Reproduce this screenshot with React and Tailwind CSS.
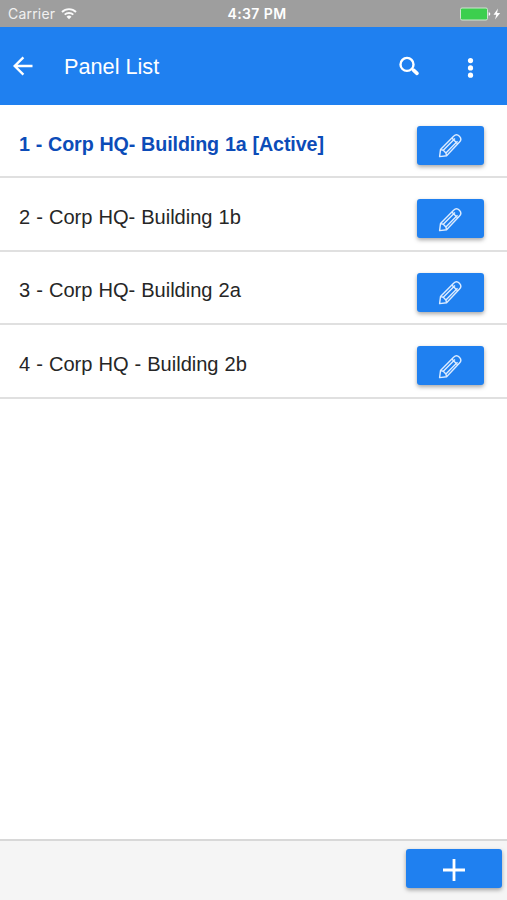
const panels = [
  { label: '1 - Corp HQ- Building 1a [Active]', active: true },
  { label: '2 - Corp HQ- Building 1b' },
  { label: '3 - Corp HQ- Building 2a' },
  { label: '4 - Corp HQ - Building 2b' },
];

function StatusBar() {
  return (
    <div className="grid h-[27px] shrink-0 grid-cols-3 items-center bg-[#9e9e9e] text-white">
      <div className="flex items-center pl-[8px]">
        <span className="w-[48px] font-['Inter','Liberation_Sans',sans-serif] text-[14px] leading-[26px] tracking-[0.2px] whitespace-nowrap text-[#f1f1f1]">
          Carrier
        </span>
        <svg className="ml-[5px] h-[12px] w-[16px]" viewBox="0 0 16 12" fill="none" stroke="#fafafa" strokeWidth="1.9">
          <path d="M1 4a10 10 0 0 1 14 0" />
          <path d="M3.7 6.7a6.1 6.1 0 0 1 8.6 0" />
          <path d="M8 11.3 5.5 8.8a3.5 3.5 0 0 1 5 0z" fill="#fafafa" stroke="none" />
        </svg>
      </div>
      <div className="pt-px pl-[7px] text-center font-['Inter','Liberation_Sans',sans-serif] text-[14px] leading-[26px] font-semibold tracking-[0.4px] whitespace-nowrap">
        4:37 PM
      </div>
      <div className="flex items-center justify-end pr-[5px]">
        <svg className="h-[14px] w-[42px]" viewBox="0 0 42 14">
          <rect x="0.5" y="1" width="27" height="12" rx="1.5" fill="#3ccf4e" stroke="#cfe5d1" />
          <path d="M28.7 5.3q1.6 0 1.6 1.7t-1.6 1.7z" fill="#fff" />
          <path d="m38 1.6-4.5 6.1h2.8L35 12.6l5.2-6.7h-3.1z" fill="#fff" />
        </svg>
      </div>
    </div>
  );
}

function Header() {
  return (
    <header className="flex h-[78px] shrink-0 items-center bg-[#1f80f0] text-white">
      <svg className="ml-[12px] h-[22px] w-[22px]" viewBox="0 0 22 22" fill="none" stroke="#fff" strokeWidth="2.4">
        <path d="M20.5 11H3M11.4 2.3 2.7 11l8.7 8.7" />
      </svg>
      <h1 className="mt-[2px] ml-[30px] flex-1 text-[21.7px] leading-[28px] whitespace-nowrap">Panel List</h1>
      <svg className="mr-[46px] h-[22px] w-[22px]" viewBox="0 0 22 22" fill="none" stroke="#fff">
        <circle cx="9" cy="9.4" r="6.5" strokeWidth="2.4" />
        <path d="m15.5 15.1 3.5 3.2" strokeWidth="3.6" strokeLinecap="round" />
      </svg>
      <svg className="mt-[4px] mr-[32px] h-[22px] w-[9px]" viewBox="0 0 9 22" fill="#fff">
        <circle cx="4.5" cy="3.6" r="2.6" />
        <circle cx="4.5" cy="10.9" r="2.6" />
        <circle cx="4.5" cy="18.2" r="2.6" />
      </svg>
    </header>
  );
}

function PencilIcon() {
  return (
    <svg className="mt-[2px] mr-[1px] h-[24px] w-[24px]" viewBox="0 0 24 24" fill="none" stroke="#dcebff" strokeWidth="1.4" strokeLinejoin="round">
      <path d="M1.6 22.6 2.5 15.6 15.6 2.2c1.9-1.8 4.2-1.5 5.8.1s1.9 3.9.1 5.8L8.6 21.7z" />
      <path d="m2.5 15.6 2.8.7 2.6 2.7.7 2.7M5.3 16.3 17 4.5M7.9 19 19.5 7.2M13.8 4l6 6" />
    </svg>
  );
}

export default function App() {
  return (
    <div className="flex h-[900px] w-[507px] flex-col overflow-hidden bg-white font-['Liberation_Sans',Arial,sans-serif]">
      <StatusBar />
      <Header />
      <ul className="flex-1">
        {panels.map((panel) => (
          <li
            key={panel.label}
            className="flex h-[73.4px] items-center justify-between border-b-2 border-[#e0e0e0] pr-[23px] pl-[19px]"
          >
            <span
              className={
                panel.active
                  ? 'mt-[6px] text-[19.7px] leading-[26px] font-bold tracking-[-0.1px] [word-spacing:0.5px] whitespace-nowrap text-[#0c4cb8]'
                  : 'mt-[6px] text-[20.1px] leading-[26px] tracking-[-0.03px] [word-spacing:0.5px] whitespace-nowrap text-[#262626]'
              }
            >
              {panel.label}
            </span>
            <button
              aria-label="Edit"
              className="mt-[9.4px] flex h-[39px] w-[67px] items-center justify-center rounded-[3px] bg-[#1f80f0] shadow-[0_2px_4px_rgba(0,0,0,0.35)]"
            >
              <PencilIcon />
            </button>
          </li>
        ))}
      </ul>
      <footer className="flex h-[61px] shrink-0 items-start justify-end border-t-2 border-[#d8d8d8] bg-[#f5f5f5] pt-[8px] pr-[5px]">
        <button
          aria-label="Add"
          className="flex h-[39px] w-[96px] items-center justify-center rounded-[3px] bg-[#1f80f0] shadow-[0_2px_4px_rgba(0,0,0,0.35)]"
        >
          <svg className="mt-[2px] h-[24px] w-[24px]" viewBox="0 0 24 24" stroke="#fff" strokeWidth="2.8">
            <path d="M12 1v22M1 12h22" />
          </svg>
        </button>
      </footer>
    </div>
  );
}
